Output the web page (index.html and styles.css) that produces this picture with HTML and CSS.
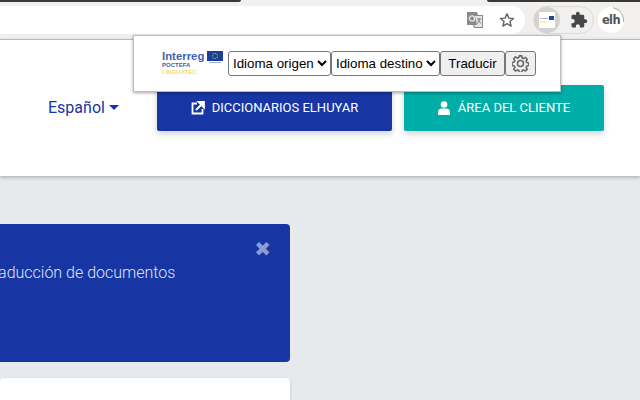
FILE: index.html
```html
<!DOCTYPE html>
<html lang="es">
<head>
<meta charset="utf-8">
<title>Traducción de documentos</title>
<link rel="stylesheet" href="styles.css">
</head>
<body>
<div class="browser">
  <div class="tabstrip"><span class="tab-left"></span><span class="tab-right"></span></div>
  <div class="toolbar">
    <div class="omnibox">
      <svg class="ico-translate" width="16" height="16" viewBox="0 0 16 16"><path d="M0 0h10l1 3h5v13H7l-1-3H0z" fill="#8a8a8a"/><path d="M8 4h7v11H8l-.6-2H10z" fill="#e4e4e4"/><circle cx="5" cy="6.500" r="2.600" fill="none" stroke="#e8e8e8" stroke-width="1.300"/><path d="M10 7h4M12 6v1M13 7c-.5 2-1.500 3.500-3 4.500M11 8c.5 1.500 1.500 2.500 3 3.200" stroke="#777" stroke-width=".9" fill="none"/></svg>
      <svg class="ico-star" width="16" height="16" viewBox="0 0 16 16"><path d="M8 1.800l1.900 4.300 4.600.4-3.500 3 1.100 4.600L8 11.700l-4.100 2.400L5 9.500l-3.500-3 4.600-.4z" fill="none" stroke="#5f6368" stroke-width="1.400" stroke-linejoin="round"/></svg>
    </div>
    <div class="ext-pill">
      <div class="ext-active">
        <div class="ext-icon"><span class="ext-bar"></span><span class="ext-flag"></span><span class="ext-yellow"></span></div>
      </div>
      <svg class="ico-puzzle" width="18" height="18" viewBox="0 0 24 24"><path d="M20.500 11H19V7c0-1.100-.9-2-2-2h-4V3.500C13 2.120 11.880 1 10.500 1S8 2.120 8 3.500V5H4c-1.100 0-1.990.9-1.990 2v3.800H3.500c1.490 0 2.700 1.210 2.700 2.700s-1.210 2.700-2.700 2.700H2V20c0 1.100.9 2 2 2h3.800v-1.500c0-1.490 1.210-2.700 2.700-2.700 1.490 0 2.700 1.210 2.700 2.700V22H17c1.100 0 2-.9 2-2v-4h1.500c1.380 0 2.500-1.120 2.500-2.500S21.880 11 20.500 11z" fill="#45474a"/></svg>
    </div>
    <div class="avatar">elh</div>
  </div>
</div>

<header class="site-header">
  <a class="lang">Español<span class="caret"></span></a>
  <a class="btn btn-blue">
    <svg width="14" height="14" viewBox="0 0 14 14"><path d="M6 2.500H1.500v10h10V8" fill="none" stroke="#fff" stroke-width="1.800"/><path d="M5 9l6-6M7.500 1H13v5.500z" stroke="#fff" stroke-width="1.800" fill="#fff"/></svg>
    DICCIONARIOS ELHUYAR
  </a>
  <a class="btn btn-teal">
    <svg width="12" height="14" viewBox="0 0 12 14"><circle cx="6" cy="3.500" r="3.300" fill="#fff"/><path d="M0 14v-2.500C0 9 1.500 7.600 3.500 7.600h5c2 0 3.500 1.400 3.500 3.900V14z" fill="#fff"/></svg>
    ÁREA DEL CLIENTE
  </a>
</header>

<main class="content">
  <section class="notice">
    <p class="notice-text">Traducción de documentos</p>
    <span class="notice-close">✖</span>
  </section>
  <section class="panel"></section>
</main>

<div class="popup">
  <div class="logo">
    <div class="logo-text">
      <span class="logo-name">Interreg</span>
      <span class="logo-sub">POCTEFA</span>
      <span class="logo-project">LINGUATEC</span>
    </div>
    <div class="logo-eu">
      <div class="logo-flag"><span class="logo-stars"></span></div>
      <span class="logo-caption"></span>
    </div>
  </div>
  <select class="field"><option>Idioma origen</option></select>
  <select class="field"><option>Idioma destino</option></select>
  <button class="action">Traducir</button>
  <button class="action action-icon">
    <svg width="17" height="17" viewBox="0 0 16 16"><path d="M6.800.8h2.400l.4 2 1.300.6 1.800-1.100 1.700 1.700-1.100 1.800.6 1.300 2 .4v2.400l-2 .4-.6 1.300 1.100 1.800-1.700 1.700-1.800-1.100-1.300.6-.4 2H6.800l-.4-2-1.300-.6-1.800 1.100-1.700-1.700 1.100-1.800-.6-1.300-2-.4V7l2-.4.6-1.300-1.100-1.800 1.700-1.700 1.800 1.100 1.300-.6z" fill="none" stroke="#666" stroke-width="1.500" stroke-linejoin="round"/><circle cx="8" cy="8" r="2.800" fill="none" stroke="#666" stroke-width="1.500"/></svg>
  </button>
</div>
</body>
</html>
```
FILE: styles.css
```css
* { box-sizing: border-box; }
html, body { margin: 0; height: 100%; }
body {
  width: 640px;
  height: 400px;
  overflow: hidden;
  background: #e7eaed;
  font-family: Roboto, sans-serif;
  position: relative;
}

.browser { height: 40px; background: #f1f0ee; border-bottom: 1px solid #c6c6c6; }
.tabstrip { height: 6px; display: flex; justify-content: space-between; align-items: flex-start; }
.tab-left { width: 241px; height: 2px; background: #3a3a38; border-bottom-right-radius: 4px; }
.tab-right { width: 153px; height: 2px; background: #3a3a38; border-bottom-left-radius: 4px; }
.toolbar { height: 28px; display: flex; align-items: center; }
.omnibox {
  width: 525px;
  height: 28px;
  background: #fff;
  border-radius: 0 14px 14px 0;
  display: flex;
  align-items: center;
  justify-content: flex-end;
  gap: 16px;
  padding-right: 10px;
}
.ext-pill {
  width: 61px;
  height: 28px;
  margin-left: 8px;
  border: 1px solid #dedcda;
  border-radius: 14px;
  display: flex;
  align-items: center;
  gap: 10px;
}
.ext-active {
  width: 26px;
  height: 26px;
  border-radius: 50%;
  background: #d3d2d1;
  display: flex;
  align-items: center;
  justify-content: center;
}
.ext-icon { width: 16px; height: 16px; background: #fff; position: relative; }
.ext-bar { position: absolute; left: 1px; top: 6px; width: 8px; height: 1px; background: #a9b6da; }
.ext-flag { position: absolute; right: 1px; top: 4px; width: 5px; height: 4px; background: #24468f; }
.ext-yellow { position: absolute; left: 1px; top: 9px; width: 7px; height: 2px; background: #f8ecc0; }
.avatar {
  width: 26px;
  height: 26px;
  margin-left: 4px;
  border-radius: 50%;
  background: #fff;
  color: #555;
  font: 700 11.500px/26px "DejaVu Sans", sans-serif;
  letter-spacing: -.6px;
  text-align: center;
  position: relative;
}
.avatar::after {
  content: "";
  position: absolute;
  inset: 0;
  border-radius: 50%;
  border: 1.500px solid transparent;
  border-right-color: #b5aca5;
  transform: rotate(-35deg);
}

.site-header {
  height: 136px;
  background: #fff;
  box-shadow: 0 1px 4px rgba(0, 0, 0, .3);
  display: flex;
  align-items: flex-start;
  padding: 45px 36px 0 48px;
  position: relative;
}
.lang { color: #1736a4; font-size: 16px; line-height: 46px; margin-right: 38px; width: 71px; white-space: nowrap; }
.caret {
  display: inline-block;
  margin-left: 4px;
  vertical-align: 3px;
  border-top: 5px solid #1736a4;
  border-left: 5px solid transparent;
  border-right: 5px solid transparent;
}
.btn {
  height: 46px;
  padding-bottom: 1px;
  border-radius: 2px;
  color: #fff;
  font-size: 13px;
  font-weight: 400;
  display: flex;
  align-items: center;
  justify-content: center;
  gap: 7px;
  box-shadow: 0 3px 6px rgba(0, 0, 0, .18);
}
.btn-blue { width: 235px; background: #1736a4; margin-right: 12px; }
.btn-teal { width: 200px; background: #00ada7; gap: 8px; }

.content { padding-top: 48px; }
.notice {
  width: 350px;
  height: 138px;
  margin-left: -60px;
  padding-left: 44px;
  background: #1736a4;
  border-radius: 4px;
  position: relative;
}
.notice-text { margin: 0; padding-top: 39px; color: #dfe4f7; font-size: 16px; font-weight: 300; line-height: 20px; }
.notice-close { position: absolute; right: 19px; top: 15px; color: #8c9bd3; font: 700 20px/20px "DejaVu Sans", sans-serif; }
.panel {
  width: 290px;
  height: 22px;
  margin-top: 16px;
  background: #fff;
  border-radius: 4px 4px 0 0;
  box-shadow: 0 1px 3px rgba(0, 0, 0, .2);
}

.popup {
  position: absolute;
  left: 133px;
  top: 35px;
  width: 428px;
  height: 57px;
  background: #fff;
  border: 1px solid #bdbdbd;
  box-shadow: 0 1px 3px rgba(0, 0, 0, .35);
  display: flex;
  align-items: center;
  padding-left: 28px;
}
.logo { width: 66px; display: flex; align-items: flex-start; gap: 3px; }
.logo-text { display: flex; flex-direction: column; font-family: "Liberation Sans", sans-serif; width: 42px; }
.logo-name { font-size: 11.400px; line-height: 11px; font-weight: 700; color: #3f63b2; }
.logo-sub { font-size: 6px; line-height: 7px; font-weight: 700; color: #3f62ad; }
.logo-project { font-size: 6px; line-height: 7px; font-weight: 700; color: #f5d777; }
.logo-eu { display: flex; flex-direction: column; gap: 1px; }
.logo-flag { width: 16px; height: 10px; background: #1b3f94; display: flex; align-items: center; justify-content: center; }
.logo-stars { width: 6px; height: 6px; border: 1px dotted #d9c84a; border-radius: 50%; }
.logo-caption { width: 12px; height: 1px; margin-left: 2px; background: #a9b6da; }
.field, .action {
  height: 25px;
  font-family: "Liberation Sans", sans-serif;
  font-size: 13.333px;
  color: #000;
  border: 1px solid #767676;
  border-radius: 3px;
}
.field { background: #fff; padding: 0; }
.action { background: #efefef; width: 65px; padding: 0; }
.action-icon { width: 31px; display: flex; align-items: center; justify-content: center; }
```
